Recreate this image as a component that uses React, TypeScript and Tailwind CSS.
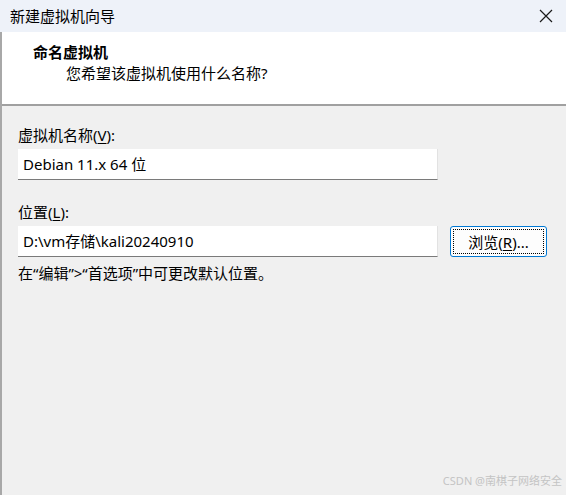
export default function App() {
  const font = {
    fontFamily: '"Noto Sans", "Noto Sans CJK SC", sans-serif',
  };

  return (
    <div
      className="w-[566px] h-[495px] flex flex-col bg-[#f0f0f0] text-[15px] text-black overflow-hidden relative"
      style={font}
    >
      {/* 标题栏 */}
      <div className="h-[32px] shrink-0 bg-[#eef2f9] flex items-center justify-between pl-[10px] pr-[13px]">
        <span className="leading-[20px]">新建虚拟机向导</span>
        <svg width="14" height="14" viewBox="0 0 14 14">
          <path d="M1 1L13 13M13 1L1 13" stroke="#1a1a1a" strokeWidth="1.2" />
        </svg>
      </div>

      <div className="flex-1 flex flex-col border-l-2 border-[#a8a8a8]">
        {/* 页眉 */}
        <div className="h-[74px] shrink-0 bg-white border-b-2 border-[#a0a0a0] pl-[31px] pt-[10px]">
          <div className="font-bold leading-[20px]">命名虚拟机</div>
          <div className="pl-[33px] mt-[1px] leading-[20px]">您希望该虚拟机使用什么名称?</div>
        </div>

        {/* 内容 */}
        <div className="flex flex-col pl-[16px] pt-[19px]">
          <div className="leading-[20px]">
            虚拟机名称(<span className="underline underline-offset-2">V</span>):
          </div>
          <div className="mt-[4px] w-[420px] h-[31px] bg-white border-b border-[#7a7a7a] border-r border-r-[#e2e2e2] flex items-center pl-[5px] leading-[20px]">
            Debian 11.x 64 位
          </div>

          <div className="mt-[22px] leading-[20px]">
            位置(<span className="underline underline-offset-2">L</span>):
          </div>
          <div className="mt-[4px] flex gap-[12px]">
            <div className="w-[420px] h-[31px] bg-white border-b border-[#7a7a7a] border-r border-r-[#e2e2e2] flex items-center pl-[5px] leading-[20px]">
              D:\vm存储\kali20240910
            </div>
            <button className="w-[97px] h-[31px] rounded-[3px] border border-[#0078d4] bg-[#fdfdfd] p-[2px]">
              <span className="w-full h-full flex items-center justify-center border border-dotted border-black leading-[20px]">
                浏览(<span className="underline underline-offset-2">R</span>)...
              </span>
            </button>
          </div>

          <div className="mt-[6px] leading-[20px]">在“编辑”&gt;“首选项”中可更改默认位置。</div>
        </div>
      </div>

      <div className="absolute right-[4px] bottom-[6px] text-[11px] text-[#c4c4c4] leading-[16px]">
        CSDN @南棋子网络安全
      </div>
    </div>
  );
}
